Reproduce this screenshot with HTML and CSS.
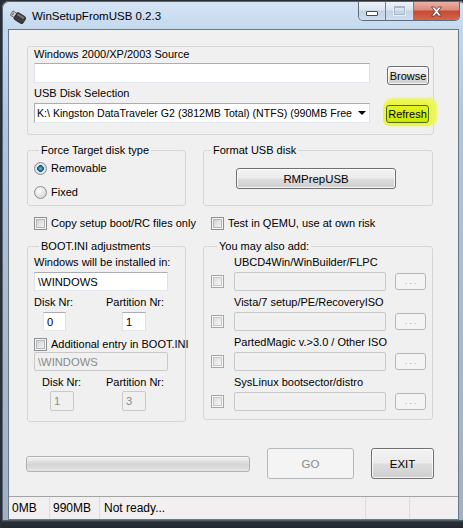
FILE: index.html
```html
<!DOCTYPE html>
<html>
<head>
<meta charset="utf-8">
<title>WinSetupFromUSB 0.2.3</title>
<link rel="stylesheet" href="styles.css">
</head>
<body>
<div class="window">
  <div class="titlebar">
    <svg class="app-icon" width="16" height="14" viewBox="0 0 16 14">
      <g transform="rotate(32 8 7)">
        <rect x="0.5" y="4.5" width="5" height="5" fill="#d2d2d2" stroke="#5a5a5a" stroke-width="0.8"/>
        <rect x="1.5" y="5.8" width="1.3" height="1" fill="#5a5a5a"/>
        <rect x="1.5" y="7.4" width="1.3" height="1" fill="#5a5a5a"/>
        <rect x="5" y="3" width="10.5" height="8" rx="1.8" fill="#3c3c3c" stroke="#1e1e1e" stroke-width="0.7"/>
        <rect x="6" y="4" width="8" height="2" rx="1" fill="#777"/>
      </g>
    </svg>
    <span class="title">WinSetupFromUSB 0.2.3</span>
    <div class="caption">
      <span class="cap-btn cap-min"><span class="min-glyph"></span></span>
      <span class="cap-btn cap-max"><span class="max-glyph"></span></span>
      <span class="cap-btn cap-close">
        <svg width="13" height="11" viewBox="0 0 13 11">
          <path d="M1.5 1 L4.5 1 L6.5 3.4 L8.5 1 L11.5 1 L8 5.5 L11.5 10 L8.5 10 L6.5 7.6 L4.5 10 L1.5 10 L5 5.5 Z" fill="#ffffff" stroke="#5a2a22" stroke-width="0.8" stroke-linejoin="round"/>
        </svg>
      </span>
    </div>
  </div>

  <div class="client">
    <div class="content">
      <div class="group group-source">
        <div class="label">Windows 2000/XP/2003 Source</div>
        <div class="field-row">
          <div class="textbox source-box"></div>
          <div class="btn browse">Browse</div>
        </div>
        <div class="label label-usb">USB Disk Selection</div>
        <div class="field-row row-usb">
          <div class="combo">
            <span class="combo-text">K:\ Kingston DataTraveler G2 (3812MB Total) (NTFS) (990MB Free</span>
            <span class="combo-arrow"></span>
          </div>
          <div class="btn refresh">Refresh</div>
        </div>
      </div>

      <div class="cols row-a">
        <div class="group group-force">
          <div class="legend">Force Target disk type</div>
          <div class="option opt-first"><span class="radio checked"></span><span class="opt-text">Removable</span></div>
          <div class="option opt-fixed"><span class="radio"></span><span class="opt-text">Fixed</span></div>
        </div>
        <div class="group group-format">
          <div class="legend legend-right">Format USB disk</div>
          <div class="btn rmprep">RMPrepUSB</div>
        </div>
      </div>

      <div class="cols row-b">
        <div class="option check-left"><span class="checkbox"></span><span class="opt-text">Copy setup boot/RC files only</span></div>
        <div class="option check-right"><span class="checkbox"></span><span class="opt-text">Test in QEMU, use at own risk</span></div>
      </div>

      <div class="cols row-c">
        <div class="group group-boot">
          <div class="legend">BOOT.INI adjustments</div>
          <div class="label boot-label">Windows will be installed in:</div>
          <div class="textbox win-box"><span class="tb-text">\WINDOWS</span></div>
          <div class="nr-labels"><span class="nr-disk">Disk Nr:</span><span>Partition Nr:</span></div>
          <div class="nr-inputs">
            <div class="textbox nr-box nr-disk-box"><span class="tb-text">0</span></div>
            <div class="textbox nr-box nr-part-box"><span class="tb-text">1</span></div>
          </div>
          <div class="option add-entry"><span class="checkbox"></span><span class="opt-text">Additional entry in BOOT.INI</span></div>
          <div class="textbox win-box disabled"><span class="tb-text">\WINDOWS</span></div>
          <div class="nr-labels nr-labels-2"><span class="nr-disk nr-disk-2">Disk Nr:</span><span>Partition Nr:</span></div>
          <div class="nr-inputs nr-inputs-2">
            <div class="textbox nr-box disabled nr-disk-box-2"><span class="tb-text">1</span></div>
            <div class="textbox nr-box disabled nr-part-box-2"><span class="tb-text">3</span></div>
          </div>
        </div>

        <div class="group group-add">
          <div class="legend legend-right">You may also add:</div>
          <div class="addlist">
            <div class="add-item">
              <div class="add-label">UBCD4Win/WinBuilder/FLPC</div>
              <div class="add-row"><span class="checkbox light"></span><div class="textbox disabled add-box"></div><div class="btn dots disabled">. . .</div></div>
            </div>
            <div class="add-item">
              <div class="add-label">Vista/7 setup/PE/RecoveryISO</div>
              <div class="add-row"><span class="checkbox light"></span><div class="textbox disabled add-box"></div><div class="btn dots disabled">. . .</div></div>
            </div>
            <div class="add-item">
              <div class="add-label">PartedMagic v.&gt;3.0 / Other ISO</div>
              <div class="add-row"><span class="checkbox light"></span><div class="textbox disabled add-box"></div><div class="btn dots disabled">. . .</div></div>
            </div>
            <div class="add-item">
              <div class="add-label">SysLinux bootsector/distro</div>
              <div class="add-row"><span class="checkbox light"></span><div class="textbox disabled add-box"></div><div class="btn dots disabled">. . .</div></div>
            </div>
          </div>
        </div>
      </div>

      <div class="actions">
        <div class="progress"></div>
        <div class="btn btn-go disabled">GO</div>
        <div class="btn btn-exit">EXIT</div>
      </div>
    </div>

    <div class="statusbar">
      <div class="cell cell-1">0MB</div>
      <div class="cell cell-2">990MB</div>
      <div class="cell cell-3">Not ready...</div>
      <div class="cell cell-4"></div>
      <div class="cell cell-5"></div>
    </div>
  </div>
  <div class="bottom-frame"></div>
</div>
</body>
</html>
```

FILE: styles.css
```css
html, body {
  margin: 0;
  padding: 0;
}
body {
  width: 463px;
  height: 528px;
  overflow: hidden;
  background: #2a2f35;
  font-family: "Liberation Sans", Arial, sans-serif;
  font-size: 11px;
  color: #000;
}

.window {
  margin: 1px 0 0 2px;
  width: 464px;
  height: 540px;
  box-sizing: border-box;
  padding: 0 7px 0 6px;
  border-radius: 7px 7px 0 0;
  background: linear-gradient(180deg, #d6e5f5 0, #c4d8ed 28px, #b3c5d8 120px, #a2afbd 100%);
  box-shadow: inset 0 0 0 1px #56677a;
  display: flex;
  flex-direction: column;
}

/* ---------- title bar ---------- */
.titlebar {
  height: 28px;
  flex: none;
  display: flex;
  align-items: flex-start;
}
.app-icon {
  margin: 9px 0 0 2px;
  flex: none;
}
.title {
  margin: 7px 0 0 6px;
  font-size: 11.5px;
  line-height: 16px;
  color: #000;
}
.caption {
  margin: 1px -1px 0 auto;
  display: flex;
  height: 18px;
  border: 1px solid #5d6d80;
  border-top: none;
  border-radius: 0 0 5px 5px;
  overflow: hidden;
}
.cap-btn {
  height: 18px;
  display: flex;
  align-items: center;
  justify-content: center;
  box-sizing: border-box;
}
.cap-min {
  width: 27px;
  border-right: 1px solid #6f8094;
  background: linear-gradient(180deg, #eef3f9 0, #d9e4f0 45%, #c2d3e6 50%, #cfdeee 100%);
}
.cap-max {
  width: 28px;
  border-right: 1px solid #6f8094;
  background: linear-gradient(180deg, #eef3f9 0, #d9e4f0 45%, #c2d3e6 50%, #cfdeee 100%);
}
.cap-close {
  width: 45px;
  background: linear-gradient(180deg, #eab0a6 0, #d98a7a 45%, #c8472f 50%, #d4674c 100%);
}
.min-glyph {
  width: 10px;
  height: 3px;
  margin-top: 5px;
  background: #fff;
  border: 1px solid #3f4c5c;
  border-radius: 1px;
}
.max-glyph {
  width: 9px;
  height: 6px;
  margin-top: -2px;
  border: 1px solid #a9b8c9;
  border-top-width: 2px;
  background: transparent;
  box-shadow: 0 0 0 1px #e8eef5;
}

/* ---------- client ---------- */
.client {
  flex: none;
  height: 491px;
  box-sizing: border-box;
  border: 1px solid #66788b;
  background: #f0f0f0;
  display: flex;
  flex-direction: column;
}
.content {
  padding: 16px 0 0 18px;
}

.group {
  box-sizing: border-box;
  border: 1px solid #d5d5d5;
  border-radius: 3px;
}
.legend {
  width: max-content;
  margin: -8px 0 0 5px;
  padding: 0 2px;
  line-height: 14px;
  background: #f0f0f0;
  white-space: nowrap;
}
.legend-right {
  margin-left: 6px;
}
.label {
  line-height: 14px;
  white-space: nowrap;
}

/* controls */
.textbox {
  box-sizing: border-box;
  background: #fff;
  border: 1px solid #abadb3;
  border-right-color: #dbdfe6;
  border-bottom-color: #e3e9ef;
  border-left-color: #e2e3ea;
  display: flex;
  align-items: center;
}
.textbox.disabled {
  background: #f0f0f0;
  border: 1px solid #c9c9c9;
  border-radius: 2px;
  color: #8a8a8a;
}
.tb-text {
  padding-left: 3px;
  line-height: 14px;
  font-size: 11.2px;
}
.btn {
  box-sizing: border-box;
  border: 1px solid #707070;
  border-radius: 3px;
  background: linear-gradient(180deg, #f3f3f3 0, #ebebeb 48%, #dddddd 52%, #cfcfcf 100%);
  box-shadow: inset 0 0 0 1px rgba(255, 255, 255, 0.8);
  display: flex;
  align-items: center;
  justify-content: center;
  line-height: 14px;
  color: #000;
  white-space: nowrap;
}
.btn.disabled {
  border-color: #b4b8bb;
  background: #f4f4f4;
  box-shadow: none;
  color: #8a8a8a;
}

/* source group */
.group-source {
  width: 407px;
  height: 89px;
  padding-left: 6px;
}
.field-row {
  display: flex;
  align-items: flex-start;
  margin-top: 2px;
}
.source-box {
  width: 336px;
  height: 20px;
}
.browse {
  width: 42px;
  height: 19px;
  margin: 3px 0 0 17px;
}
.label-usb {
  margin-top: 1px;
}
.row-usb {
  margin-top: 3px;
}
.combo {
  box-sizing: border-box;
  width: 336px;
  height: 20px;
  background: #fff;
  border: 1px solid #abadb3;
  border-right-color: #dbdfe6;
  border-bottom-color: #e3e9ef;
  display: flex;
  align-items: center;
}
.combo-text {
  width: 318px;
  padding-left: 2px;
  white-space: nowrap;
  line-height: 14px;
  font-size: 10.6px;
}
.combo-arrow {
  margin-left: 3px;
  width: 0;
  height: 0;
  border-left: 4px solid transparent;
  border-right: 4px solid transparent;
  border-top: 4px solid #000;
}
.refresh {
  width: 43px;
  height: 18px;
  margin: 2px 0 0 16px;
  border-color: #4f6a10;
  background: linear-gradient(180deg, #e4f524 0, #d8ef10 50%, #cfe808 100%);
  box-shadow: 0 0 0 3px #eaf54a, 3px -2px 2px 5px rgba(238, 247, 75, 0.9);
}

/* columns */
.cols {
  display: grid;
  grid-template-columns: 159px 230px;
  column-gap: 17px;
  align-items: start;
}
.row-a {
  margin-top: 15px;
}
.row-b {
  margin-top: 9px;
}
.row-c {
  margin-top: 15px;
}

.option {
  display: flex;
  align-items: center;
  height: 16px;
  white-space: nowrap;
}
.opt-text {
  margin-left: 4px;
  line-height: 14px;
  white-space: nowrap;
}
.group-force {
  height: 56px;
  padding-left: 6px;
}
.opt-first {
  margin-top: 3px;
}
.opt-fixed {
  margin-top: 8px;
}
.radio {
  flex: none;
  width: 13px;
  height: 13px;
  box-sizing: border-box;
  border-radius: 50%;
  border: 1px solid #8c8f92;
  background: radial-gradient(circle at 40% 35%, #ffffff 0, #e9e9e9 40%, #c9cbce 100%);
}
.radio.checked {
  background: radial-gradient(circle at 50% 50%, #63c6e4 0, #2a87a8 22%, #15506a 40%, #e6e8ea 46%, #c9cbce 100%);
}
.checkbox {
  flex: none;
  width: 13px;
  height: 13px;
  box-sizing: border-box;
  border: 1px solid #8e8f8f;
  background: linear-gradient(135deg, #c3c7cb 0, #dfe1e3 45%, #f7f7f7 100%);
  box-shadow: inset 0 0 0 1px #f5f5f5, inset 0 0 0 2px #b3b7bb;
}
.checkbox.light {
  border-color: #a5a7a9;
  background: linear-gradient(135deg, #d2d5d8 0, #e8e9ea 45%, #f9f9f9 100%);
  box-shadow: inset 0 0 0 1px #f7f7f7, inset 0 0 0 2px #c6c9cc;
}

.group-format {
  height: 56px;
  padding-left: 1px;
}
.rmprep {
  width: 160px;
  height: 21px;
  margin: 11px 0 0 31px;
  font-size: 11.4px;
}
.check-left {
  padding-left: 7px;
}
.check-right {
  padding-left: 8px;
}

/* boot.ini group */
.group-boot {
  height: 176px;
  padding-left: 6px;
}
.boot-label {
  margin-top: 2px;
}
.win-box {
  width: 134px;
  height: 19px;
  margin-top: 3px;
}
.add-entry + .win-box {
  margin-top: 0;
}
.nr-labels {
  display: flex;
  margin-top: 4px;
  line-height: 14px;
  white-space: nowrap;
}
.nr-disk {
  width: 72px;
}
.nr-labels-2 {
  margin-top: 4px;
}
.nr-disk-2 {
  width: 64px;
  padding-left: 8px;
}
.nr-inputs {
  display: flex;
  margin-top: 3px;
}
.nr-box {
  height: 19px;
}
.nr-disk-box {
  width: 23px;
  margin-left: 9px;
}
.nr-part-box {
  width: 24px;
  margin-left: 56px;
}
.add-entry {
  margin-top: 5px;
}
.nr-inputs-2 {
  margin-top: 2px;
}
.nr-inputs-2 .nr-box {
  height: 20px;
}
.nr-disk-box-2 {
  width: 24px;
  margin-left: 16px;
}
.nr-part-box-2 {
  width: 24px;
  margin-left: 48px;
}

/* add group */
.group-add {
  height: 174px;
  padding-left: 7px;
}
.addlist {
  margin-top: 2px;
  display: flex;
  flex-direction: column;
  gap: 4px;
}
.add-label {
  padding-left: 23px;
  line-height: 14px;
  white-space: nowrap;
}
.add-row {
  margin-top: 3px;
  display: flex;
  align-items: center;
  height: 19px;
}
.add-box {
  width: 152px;
  height: 19px;
  margin-left: 10px;
}
.dots {
  width: 31px;
  height: 17px;
  margin-left: 9px;
  font-size: 8px;
  letter-spacing: 0;
  color: #a8a8a8;
  border-color: #c6c8ca;
}

/* actions */
.actions {
  display: flex;
  align-items: center;
  margin-top: 26px;
  height: 31px;
}
.progress {
  width: 224px;
  height: 16px;
  margin-left: -1px;
  box-sizing: border-box;
  border: 1px solid #b2b2b2;
  border-radius: 3px;
  background: linear-gradient(180deg, #f6f6f6 0, #e2e2e2 30%, #d4d4d4 55%, #dcdcdc 80%, #e8e8e8 100%);
}
.btn-go {
  width: 87px;
  height: 31px;
  margin-left: 17px;
  font-size: 11.5px;
}
.btn-exit {
  width: 63px;
  height: 31px;
  margin-left: 17px;
  font-size: 11.5px;
}

/* status bar */
.statusbar {
  margin-top: auto;
  height: 23px;
  box-sizing: border-box;
  border-top: 1px solid #a3a3a3;
  background: #f1efef;
  display: flex;
  font-size: 12px;
}
.cell {
  box-sizing: border-box;
  height: 100%;
  display: flex;
  align-items: center;
  line-height: 15px;
  white-space: nowrap;
}
.cell-1 {
  width: 40px;
  padding-left: 3px;
}
.cell-2 {
  width: 50px;
  padding-left: 3px;
  border-left: 1px solid #dcdcdc;
}
.cell-3 {
  width: 266px;
  padding-left: 4px;
  border-left: 1px solid #dcdcdc;
}
.cell-4 {
  width: 44px;
  border-left: 1px solid #dcdcdc;
}
.cell-5 {
  flex: 1;
  border-left: 1px solid #dcdcdc;
}

.bottom-frame {
  flex: 1;
  margin: 0 -7px 0 -6px;
  background: linear-gradient(180deg, #5d6a78 0, #2a3038 2px, #15181c 100%);
}
```
